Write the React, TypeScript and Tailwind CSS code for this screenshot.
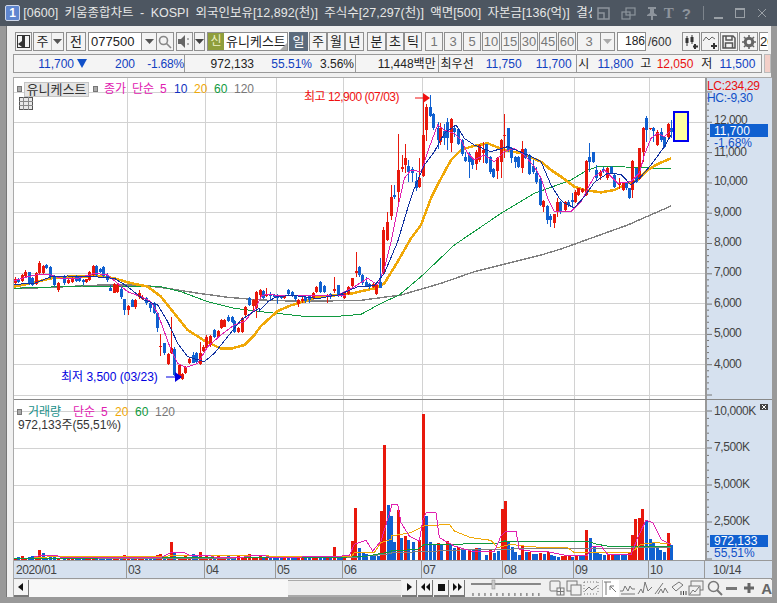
import React from 'react';

const RED = '#e8180c';
const BLUE = '#1060d0';

// candle tables read off the chart: [x, red?, top, bottom, high, low], offset + value/3 gives the pixel
const candlesA = [
  [43,1,88,100,82,106],[52,0,88,96,84,100],[64,1,76,94,72,96],[73,1,65,78,60,80],[85,0,66,100,66,104],[94,0,85,104,80,108],
  [106,1,70,102,66,104],[115,1,38,68,32,72],[127,1,47,70,44,76],[136,0,45,55,42,58],[148,0,52,82,48,86],[160,0,78,105,76,110],
  [170,1,98,120,96,126],[190,0,78,100,74,104],[202,1,90,100,88,102],[214,1,85,95,80,98],[226,0,78,92,76,96],[235,0,80,92,78,96],
  [245,0,90,97,88,105],[254,1,88,95,86,98],[265,1,65,90,62,92],[276,1,47,75,45,78],[286,0,47,75,45,80],[298,0,58,65,55,70],
  [307,0,50,78,48,82],[319,0,75,90,70,97],[328,0,115,122,105,124],[340,1,103,128,100,130],[349,1,105,125,102,128],[360,0,117,140,112,146],
  [370,0,148,180,146,195],[382,1,168,180,165,195],[394,0,150,170,148,172],[403,1,150,170,148,176],[415,1,130,140,120,146],[424,1,140,146,136,150],
  [436,0,145,160,142,164],[446,0,160,175,158,186],[458,0,160,188,156,192],[467,0,190,235,186,245],[478,1,288,292,252,318],[490,0,280,310,278,316],
  [500,1,312,343,310,346],[511,1,295,310,200,312],[520,0,297,375,292,378],[533,1,345,385,343,388],[542,1,372,387,368,390],[553,1,350,368,348,372],
  [563,1,327,338,324,342],[575,0,315,338,305,340],[584,0,310,335,306,338],[596,1,310,342,275,346],[607,1,290,303,286,305],[616,1,260,295,256,298],
  [628,1,258,285,254,290],[638,0,240,262,236,265],[650,1,243,262,240,264],[660,1,210,235,206,238],[670,1,210,230,206,232],[680,0,200,212,196,216],
  [692,0,200,215,198,218],[700,0,213,247,210,248],[712,1,233,245,230,248],[724,1,205,245,200,248],[733,1,170,195,168,198],[745,0,145,165,140,168],
  [755,1,150,168,146,182],[765,1,125,175,122,205],[777,1,120,135,116,140],
];
const candlesB = [
  [35,0,88,108,85,112],[46,1,98,103,78,106],[57,0,98,103,90,115],[68,0,100,104,96,108],[78,0,102,108,95,125],[90,0,100,108,98,112],
  [100,1,100,107,98,110],[112,0,84,97,82,100],[122,0,90,100,88,104],[132,0,100,112,98,118],[142,1,113,125,110,135],[153,1,112,118,105,122],
  [163,0,105,118,100,124],[175,0,103,115,100,122],[186,1,93,108,90,112],[196,1,75,90,72,94],[208,0,60,90,58,94],[218,0,73,90,70,94],
  [228,1,100,105,96,122],[238,0,95,105,92,110],[250,1,82,88,45,92],[260,0,70,100,68,104],[270,0,95,103,92,106],[280,1,92,108,90,112],
];
const candlesC = [
  [22,1,575,597,572,600],[34,1,550,572,548,575],[44,1,528,535,470,545],[55,0,515,540,512,545],[64,0,540,565,538,570],[76,0,560,572,546,576],
  [85,0,567,577,565,582],[97,1,567,577,565,580],[106,1,570,597,568,600],[118,0,560,578,490,580],[127,1,405,535,395,538],[139,1,380,435,350,438],
  [151,1,305,362,270,376],[160,0,300,307,270,312],[172,1,225,290,118,320],[182,1,215,222,180,232],[193,1,190,210,148,235],[202,0,212,230,195,262],
  [214,0,222,235,215,262],[224,0,258,280,235,288],[235,1,250,275,190,280],[247,1,120,243,12,246],[256,1,35,105,28,138],[267,0,35,62,0,65],
  [277,0,58,100,55,106],[290,0,100,135,80,162],[298,1,100,140,85,150],[310,0,108,128,88,150],[319,0,82,130,68,165],[331,1,72,145,70,172],
  [340,0,100,110,92,125],[352,0,103,148,98,150],[364,0,135,178,132,182],[373,0,185,197,172,200],[385,0,178,200,170,250],[394,0,190,210,188,222],
  [406,1,170,207,165,225],[415,1,150,195,148,200],[427,1,165,175,140,205],[436,0,148,205,146,208],[448,0,185,230,182,236],[457,0,222,245,218,250],
  [469,1,190,228,185,252],[481,1,135,200,132,248],[490,1,120,122,58,190],[502,0,100,165,98,170],[511,0,160,188,155,205],[523,0,186,200,182,218],
  [532,0,185,215,182,220],[544,1,163,220,138,235],[553,0,162,190,160,192],[565,0,180,237,178,240],[577,0,213,232,196,238],[586,0,235,262,215,268],
  [598,0,252,330,250,334],[607,1,318,335,314,350],[619,0,332,375,330,388],[628,0,362,375,358,395],[640,1,358,385,356,398],[649,1,322,352,310,365],
  [658,0,320,352,318,358],
];
const candlesD = [
  [42,1,320,345,318,348],[52,0,320,330,316,335],[62,0,315,320,295,340],[72,1,290,320,286,324],[82,1,280,300,278,304],[92,1,282,290,278,294],
  [104,1,198,300,195,304],[114,0,185,200,145,230],[127,0,172,200,170,204],[136,0,225,250,210,255],[148,1,230,242,226,256],[157,0,222,228,215,234],
  [169,1,220,250,215,254],[181,0,215,235,212,238],[190,0,240,275,238,278],[205,1,265,270,250,282],[217,1,265,285,262,288],[225,0,265,280,262,286],
  [233,0,280,310,278,312],[244,1,198,285,195,308],[254,0,220,260,218,264],[265,1,160,252,158,256],[275,1,98,170,96,200],[286,0,70,105,62,140],
  [298,1,100,103,98,106],[305,0,100,108,96,140],[318,1,110,150,106,154],[329,0,112,135,98,140],[340,0,125,155,122,160],[350,1,88,125,84,128],
  [361,0,100,110,75,130],
];

type Row = number[];
const toCandles = (rows: Row[], ox: number, oy: number) =>
  rows.map(([z, red, top, bot, hi, lo]) => ({
    x: Math.round(ox + z / 3),
    red: red === 1,
    top: oy + top / 3,
    bot: oy + bot / 3,
    hi: oy + hi / 3,
    lo: oy + lo / 3,
  }));

const candles = [
  ...toCandles(candlesA, 0, 250),
  ...toCandles(candlesB, 250, 262),
  ...toCandles(candlesC, 340, 95),
  ...toCandles(candlesD, 550, 95),
];

const line = (...parts: [number, number, number[]][]) =>
  parts
    .map(([ox, oy, flat]) => {
      const out: string[] = [];
      for (let i = 0; i < flat.length; i += 2) out.push(ox + flat[i] / 3 + ',' + (oy + flat[i + 1] / 3));
      return out.join(' ');
    })
    .join(' ');

const ma5 = line(
  [0, 250, [40,92,80,80,120,72,150,75,180,85,230,85,280,70,320,75,350,100,380,125,420,140,450,155,470,190,490,245,510,300,530,340,555,352,590,340,620,290,660,255,700,225,730,215,760,180,780,140]],
  [250, 262, [30,100,50,98,85,100,150,100,190,100,240,100,280,100]],
  [340, 95, [0,595,40,575,80,550,110,570,130,520,150,440,170,340,190,250,210,225,240,230,260,170,290,90,310,105,340,115,360,135,380,175,400,195,430,180,460,200,490,170,520,160,550,180,580,215,600,250,620,310,640,350,660,350]],
  [550, 95, [60,350,90,320,110,280,130,245,160,225,200,265,240,260,265,235,280,180,300,130,320,115,340,125,360,105]],
);
const ma10 = line(
  [0, 250, [40,103,100,100,150,80,200,78,280,80,340,85,380,110,430,150,470,165,500,215,530,280,560,320,610,335,640,310,680,260,720,210,750,190,775,175]],
  [250, 262, [25,147,50,120,75,105,120,100,150,103,200,110,250,100,280,97]],
  [340, 95, [0,597,50,575,100,572,130,535,170,440,200,340,220,280,250,210,280,170,310,115,345,90,370,130,400,150,450,170,500,155,560,180,600,200,630,270,655,310]],
  [550, 95, [40,325,70,338,100,305,130,262,170,235,210,238,240,270,270,245,300,210,340,155,360,120]],
);
const ma20 = line(
  [0, 250, [40,110,100,97,150,85,200,80,300,78,340,85,380,97,440,110,480,140,520,190,560,240,610,272,660,296,690,296,730,285,760,255,780,228]],
  [250, 262, [80,147,120,130,160,118,200,105,250,100,300,95,330,88]],
  [340, 95, [100,580,130,565,170,500,210,430,240,390,270,310,300,250,330,195,360,165,390,155,440,145,490,165,540,175,600,200,630,225]],
  [550, 95, [30,245,70,275,100,285,150,292,190,285,230,265,260,255,290,225,320,207,360,190]],
);
const ma60 = line(
  [0, 250, [40,115,90,113,240,108,480,110,540,125,620,155,700,175,780,185]],
  [300, 316, [0,0,120,0,180,-5]],
  [340, 95, [120,625,175,600,240,545,340,450,480,355,580,295]],
  [550, 95, [60,255,110,225,140,215,200,215,360,222]],
);
const ma120 = line(
  [0, 250, [40,115,130,113,300,105,420,105,500,115,580,128,680,142,780,150]],
  [250, 262, [150,118,330,115]],
  [340, 95, [180,600,300,565,400,530,500,505,600,480,660,462]],
  [550, 95, [230,390,360,333]],
);

const volPink = line(
  [0, 480, [100,228,120,222,165,222,180,230,480,230,510,215,550,215,565,222,620,222,640,228,730,228,760,223,790,223,810,230,1000,226,1045,224,1060,190,1095,178,1115,210,1140,180,1170,82]],
  [390, 480, [0,70,20,70,30,125,55,165,85,180,95,120,105,95,135,95,145,170,190,195,240,210,310,212,330,165,345,150,375,150,385,205,430,212,470,212,520,222,590,222,605,195,630,195,650,220,720,222,740,170,765,118,785,125,810,175,840,190]],
);
const volOrange = line(
  [0, 480, [100,230,160,227,335,227,340,228,555,224,720,224,1050,228,1060,215,1120,215,1140,185,1170,175]],
  [390, 480, [0,165,60,155,100,135,175,130,190,150,240,170,300,178,320,200,360,190,400,195,460,200,530,200,550,215,640,215,720,215,750,190,790,185,840,188]],
);
const volGreen = line(
  [0, 480, [40,232,1050,228,1100,225,1170,212]],
  [390, 480, [0,210,80,205,100,190,215,190,220,186,320,186,340,180,590,182,620,190,660,197,840,198]],
);
const volGray = line(
  [0, 480, [40,233,1050,230,1170,218]],
  [390, 480, [0,215,100,212,250,205,840,200]],
);

// volume bars up to x=340 sit at the bottom with a few spikes, after that they are read one by one
const spikes: Record<number, [number, number]> = { 38: [1, 30], 42: [0, 20], 123: [1, 14], 155: [1, 15], 159: [1, 18], 170: [1, 54], 173: [0, 22], 193: [0, 18], 198: [1, 24], 248: [1, 18], 333: [1, 39] };
const earlyBars = candles
  .filter((c) => c.x < 345)
  .map((c, i) => {
    const key = Object.keys(spikes).map(Number).find((k) => Math.abs(k - c.x) <= 1);
    if (key !== undefined) return { x: c.x, red: spikes[key][0] === 1, h: spikes[key][1] / 3 };
    return { x: c.x, red: c.red, h: 2 + (i % 3) };
  });
const lateBars = [
  [351,1,57],[354,1,156],[358,0,36],[362,0,20],[365,0,18],[370,0,15],[373,0,12],[377,0,12],[380,1,147],[383,1,345],[387,0,165],
  [390,0,132],[393,0,55],[397,1,150],[400,0,65],[404,1,72],[407,0,60],[412,0,55],[418,1,60],[422,1,438],[425,0,132],[429,0,55],
  [433,0,45],[437,1,50],[440,0,45],[446,1,57],[449,0,45],[453,0,35],[457,1,40],[461,0,35],[463,0,30],[468,1,30],[472,0,30],
  [475,1,35],[478,0,35],[485,0,15],[489,1,30],[493,0,20],[497,0,28],[501,1,152],[504,1,177],[507,0,55],[511,0,40],[514,0,25],
  [518,0,15],[521,1,45],[525,0,25],[528,1,25],[532,0,18],[535,0,18],[539,1,20],[543,0,18],[547,1,25],[550,0,15],[553,0,12],
  [557,0,10],[561,1,12],[564,1,12],[568,1,15],[571,0,10],[575,1,15],[579,0,12],[582,0,12],[585,1,90],[589,0,65],[593,0,40],
  [596,0,25],[599,0,18],[603,0,15],[607,1,15],[611,1,15],[614,0,15],[617,0,15],[621,0,15],[624,0,15],[628,1,25],[631,1,75],
  [634,1,122],[638,1,125],[641,1,152],[645,0,118],[649,0,62],[652,0,50],[656,0,37],[659,0,30],[663,0,25],[667,1,80],[670,0,45],
].map(([x, red, h]) => ({ x, red: red === 1, h: h / 3 }));
const volBars = [...earlyBars, ...lateBars];

const gridX = [126, 204, 275, 342, 421, 502, 573, 648];
const priceGrid = [92, 122, 152, 182, 212, 243, 273, 303, 334, 364, 395];
const volGrid = [410, 447, 484, 521];
const axisLabels = [
  ['12,000', 120], ['10,000', 181], ['9,000', 212], ['8,000', 242], ['7,000', 272], ['6,000', 303], ['5,000', 333], ['4,000', 364],
] as const;
const priceTicks = Array.from({ length: 52 }, (_, i) => 92 + i * 6.06);
const volTicks = Array.from({ length: 26 }, (_, i) => 410 + i * 7.4);

const Btn = ({ className = '', children }: { className?: string; children?: React.ReactNode }) => (
  <div className={'flex items-center justify-center h-[19px] border border-[#8f8f8f] bg-[#f3f3f3] text-[13px] text-[#222] ' + className}>{children}</div>
);

const Arrow = ({ color = '#555' }: { color?: string }) => (
  <svg width="9" height="5" viewBox="0 0 9 5"><polygon points="0,0 9,0 4.5,5" fill={color} /></svg>
);

const Ico = ({ className = '', children }: { className?: string; children: React.ReactNode }) => (
  <svg width="16" height="16" viewBox="0 0 16 16" fill="none" stroke="#777" className={className}>{children}</svg>
);

const Num = ({ n }: { n: string }) => <Btn className="w-[18px] text-[#777] text-[12px]">{n}</Btn>;

const Square = () => <div className="w-[5px] h-[6px] bg-[#aaa] border border-[#777]" />;

export default function App() {
  return (
    <div className="w-[777px] h-[603px] flex flex-col overflow-hidden bg-[#999] font-['Liberation_Sans','Noto_Sans_CJK_KR',sans-serif]">
      {/* title bar */}
      <div className="h-[26px] flex items-center bg-[#4d5661] pl-[5px] pr-[10px]">
        <div className="w-[16px] h-[16px] rounded-[2px] bg-[#5f86cf] border border-[#cfd8ea] flex items-center justify-center text-white text-[12px] font-bold">1</div>
        <div className="ml-[3px] w-[596px] overflow-hidden whitespace-nowrap text-[12.5px] text-[#e6e6e6] [word-spacing:3px]">
          [0600] 키움종합차트 - KOSPI 외국인보유[12,892(천)] 주식수[27,297(천)] 액면[500] 자본금[136(억)] 결산
        </div>
        <div className="ml-[5px] flex items-center gap-[5px]">
          <svg width="14" height="13" viewBox="0 0 14 13" fill="none" stroke="#8d949c" strokeWidth="1.5"><rect x="1" y="1" width="11" height="11" /><path d="M1 6h6v6" /></svg>
          <svg width="15" height="13" viewBox="0 0 15 13" fill="none" stroke="#8d949c" strokeWidth="1.2" className="ml-[5px]"><rect x="5" y="1" width="9" height="7" /><rect x="1" y="5" width="8" height="7" /></svg>
          <svg width="14" height="13" viewBox="0 0 14 13" className="ml-[4px]"><path d="M3 0h8v2H9v4l3 2v1H8v4H6V9H2V8l3-2V2H3z" fill="#8d949c" /></svg>
          <span className="text-[15px] leading-none font-bold text-[#8d949c] font-['Liberation_Serif',serif]">T</span>
          <span className="ml-[3px] text-[15px] leading-none font-bold text-[#8d949c]">?</span>
          <div className="ml-[7px] w-px h-[14px] bg-[#7d848c]" />
          <div className="ml-[5px] mt-[10px] w-[9px] h-[2px] bg-[#9aa0a6]" />
          <div className="ml-[7px] w-[10px] h-[10px] border border-t-2 border-[#9aa0a6]" />
          <svg width="10" height="10" viewBox="0 0 10 10" stroke="#9aa0a6" className="ml-[7px]"><path d="M1 1l8 8M9 1l-8 8" /></svg>
        </div>
      </div>

      {/* window body */}
      <div className="flex-1 mx-[6px] mb-[6px] pl-[6px] bg-[#f0f0f0] flex flex-col border-l border-[#777]">
        {/* toolbar */}
        <div className="mt-[6px] h-[19px] pl-[2px] flex items-center text-[13px]">
          <Btn className="w-[17px]">
            <svg width="13" height="13" viewBox="0 0 13 13"><rect x="0.5" y="0.5" width="12" height="12" fill="none" stroke="#333" /><rect x="5" y="1" width="3" height="11" fill="#333" /><path d="M5 6L1 9l4 3z" fill="#333" /></svg>
          </Btn>
          <Btn className="ml-[1px] w-[31px] justify-between">
            <span className="w-[18px] text-center">주</span>
            <div className="h-full border-l border-[#bbb] w-[13px] flex items-center justify-center"><Arrow /></div>
          </Btn>
          <Btn className="ml-[2px] w-[20px]">전</Btn>
          <div className="ml-[2px] w-[54px] h-[19px] border border-[#8f8f8f] bg-white pl-[2px] text-[13px] leading-[17px] text-[#222]">077500</div>
          <Btn className="w-[15px] border-l-0"><Arrow /></Btn>
          <Btn className="w-[17px] border-l-0">
            <svg width="14" height="14" viewBox="0 0 14 14" fill="none" stroke="#888" strokeWidth="1.6"><circle cx="5.5" cy="5.5" r="4" /><path d="M8.5 8.5l4.5 4.5" /></svg>
          </Btn>
          <Btn className="ml-[2px] w-[17px]">
            <svg width="13" height="13" viewBox="0 0 13 13"><path d="M0 4h3l4-4v13L3 9H0z" fill="#666" /><path d="M9 4h2M9 9h2" stroke="#666" /></svg>
          </Btn>
          <Btn className="ml-[1px] w-[11px]"><Arrow color="#444" /></Btn>
          <div className="ml-[2px] w-[81px] h-[19px] border border-[#8f8f8f] bg-white flex items-center relative">
            <div className="w-[16px] h-[17px] bg-[#8f9e3c] text-[#eef2c8] text-[12px] text-center leading-[17px]">신</div>
            <span className="ml-[2px] text-[13px] text-[#222] whitespace-nowrap">유니케스트</span>
            <div className="absolute right-0 bottom-0 w-0 h-0 border-l-[7px] border-l-transparent border-b-[7px] border-b-[#aaa]" />
          </div>
          <div className="ml-[1px] w-[19px] h-[19px] bg-[#5c6b7c] text-white text-[13px] text-center leading-[19px]">일</div>
          <Btn className="w-[18px] ml-px">주</Btn>
          <Btn className="w-[18px]">월</Btn>
          <Btn className="w-[19px]">년</Btn>
          <Btn className="ml-[3px] w-[19px]">분</Btn>
          <Btn className="w-[18px]">초</Btn>
          <Btn className="w-[18px]">틱</Btn>
          <div className="ml-[3px] flex gap-px">
            {['1', '3', '5', '10', '15', '30', '45', '60'].map((n) => <Num key={n} n={n} />)}
          </div>
          <Btn className="ml-[1px] w-[24px] text-[#777] text-[12px]">3</Btn>
          <Btn className="w-[14px] border-l-0"><Arrow color="#aaa" /></Btn>
          <div className="ml-[2px] w-[29px] h-[19px] border border-[#8f8f8f] bg-white text-right text-[12px] leading-[17px] text-[#222]">186</div>
          <span className="ml-[2px] w-[34px] text-[12px] text-[#333]">/600</span>
          <Btn className="w-[18px]">
            <svg width="15" height="14" viewBox="0 0 15 14"><path d="M3 1v10M8 0v9" stroke="#333" /><rect x="1.5" y="3" width="3" height="5" fill="#333" /><rect x="6.5" y="2" width="3" height="5" fill="#333" /><path d="M11 9v5M9 11.5h5" stroke="#333" strokeWidth="2" /></svg>
          </Btn>
          <Btn className="ml-px w-[18px]">
            <svg width="15" height="14" viewBox="0 0 15 14" fill="none"><path d="M0 6l3-4 3 3 3-3 3 2" stroke="#666" /><path d="M11 8v6M8 11h6" stroke="#333" strokeWidth="2" /></svg>
          </Btn>
          <Btn className="ml-px w-[18px]">
            <svg width="14" height="14" viewBox="0 0 14 14" fill="none" stroke="#555" strokeWidth="1.5"><path d="M1 1h10l2 2v10H1z" /><path d="M4 1v4h6V1M3.5 13V8h7v5" /></svg>
          </Btn>
          <Btn className="ml-px w-[19px]">
            <svg width="14" height="14" viewBox="0 0 14 14"><circle cx="7" cy="7" r="3.8" fill="none" stroke="#666" strokeWidth="3" /><path d="M7 0v3M7 11v3M0 7h3M11 7h3M2 2l2 2M10 10l2 2M2 12l2-2M10 4l2-2" stroke="#666" strokeWidth="1.6" /></svg>
          </Btn>
          <div className="ml-px w-[9px] h-[19px] border-y border-l border-[#8f8f8f] bg-white overflow-hidden text-[13px] leading-[17px] text-[#222]">20</div>
        </div>

        {/* quote row */}
        <div className="mt-[3px] h-[19px] flex text-[12px] text-[#222] whitespace-nowrap">
          <div className="w-[172px] flex items-center border border-[#999] bg-[#f4f4f4] text-[#1040c0]">
            <span className="w-[60px] text-right">11,700</span>
            <svg width="10" height="9" viewBox="0 0 10 9" className="ml-[3px]"><polygon points="0,0 10,0 5,9" fill="#1050c8" /></svg>
            <span className="w-[48px] text-right">200</span>
            <span className="w-[49px] text-right tracking-[-0.2px]">-1.68%</span>
          </div>
          <div className="w-[171px] flex items-center border-y border-r border-[#999] bg-[#f4f4f4]">
            <span className="w-[69px] text-right">972,133</span>
            <span className="w-[58px] text-right text-[#1040c0]">55.51%</span>
            <span className="w-[42px] text-right">3.56%</span>
          </div>
          <div className="w-[83px] flex items-center border-y border-r border-[#999] bg-[#f4f4f4]">
            <span className="w-[80px] text-right">11,448백만</span>
          </div>
          <div className="w-[139px] flex items-center border-y border-r border-[#999] bg-[#f4f4f4]">
            <span className="ml-[2px] w-[36px]">최우선</span>
            <span className="w-[45px] text-right text-[#1040c0]">11,750</span>
            <span className="w-[50px] text-right text-[#1040c0]">11,700</span>
          </div>
          <div className="w-[185px] flex items-center border-y border-r border-[#999] bg-[#f4f4f4]">
            <span className="ml-[1px] w-[12px]">시</span>
            <span className="w-[43px] text-right text-[#1040c0]">11,800</span>
            <span className="ml-[7px] w-[12px]">고</span>
            <span className="w-[41px] text-right text-[#e81010]">12,050</span>
            <span className="ml-[8px] w-[12px]">저</span>
            <span className="w-[42px] text-right text-[#1040c0]">11,500</span>
          </div>
          <div className="ml-[2px] w-[7px] bg-[#f3cfc8] border border-[#bbb]" />
        </div>

        {/* chart */}
        <div className="mt-[4px] w-[759px] flex flex-col border-l border-t border-[#aaa]">
          {/* price pane */}
          <div className="h-[322px] flex border-b border-[#888]">
            <div className="relative w-[691px] bg-white">
              <svg width="691" height="321" viewBox="13 78 691 321" className="block">
                {priceGrid.map((y) => <line key={y} x1="13" x2="704" y1={y + 0.5} y2={y + 0.5} stroke="#d2d2d2" />)}
                {gridX.map((x) => <line key={x} x1={x + 0.5} x2={x + 0.5} y1="78" y2="399" stroke="#d2d2d2" />)}
                <polyline points={ma120} fill="none" stroke="#808080" strokeWidth="1.4" shapeRendering="crispEdges" />
                <polyline points={ma60} fill="none" stroke="#109a40" strokeWidth="1" shapeRendering="crispEdges" />
                <polyline points={ma20} fill="none" stroke="#f0a808" strokeWidth="2.5" shapeRendering="crispEdges" />
                {candles.map((c, i) => (
                  <g key={i} fill={c.red ? RED : BLUE} shapeRendering="crispEdges">
                    <rect x={c.x} y={c.hi} width="1" height={c.lo - c.hi} />
                    <rect x={c.x - 1} y={c.top} width="3" height={Math.max(1, c.bot - c.top)} />
                  </g>
                ))}
                <polyline points={ma5} fill="none" stroke="#e020b0" strokeWidth="1" shapeRendering="crispEdges" />
                <polyline points={ma10} fill="none" stroke="#1030a0" strokeWidth="1" shapeRendering="crispEdges" />
                <rect x="673" y="112" width="14" height="29" fill="#ffffa0" stroke="#0000f0" strokeWidth="2" />
                <text x="303" y="101" letterSpacing="-0.5" className="text-[12px] fill-[#f01010]">최고 12,900 (07/03)</text>
                <path d="M414 98h8" stroke="#f01010" /><polygon points="422,93 429,98 422,103" fill="#f01010" />
                <text x="60" y="381" className="text-[12px] fill-[#0000e0]">최저 3,500 (03/23)</text>
                <path d="M165 377h9" stroke="#0000e0" /><polygon points="174,372 181,377 174,382" fill="#0000e0" />
              </svg>
              {/* legend over the chart */}
              <div className="absolute left-[3px] top-[2px] flex items-center text-[12px] whitespace-nowrap">
                <Square />
                <div className="ml-[2px] w-[65px] h-[15px] bg-[#e4e4e4] border border-[#c4c4c4] text-[13px] leading-[13px] text-center text-[#333]">유니케스트</div>
                <div className="ml-[4px]"><Square /></div>
                <span className="ml-[6px] w-[28px] text-[#e020b0]">종가</span>
                <span className="w-[28px] text-[#e020b0]">단순</span>
                <span className="w-[14px] text-[#e020b0]">5</span>
                <span className="w-[20px] text-[#1030c0]">10</span>
                <span className="w-[20px] text-[#f0a808]">20</span>
                <span className="w-[20px] text-[#109a40]">60</span>
                <span className="text-[#777]">120</span>
              </div>
              <svg width="14" height="13" viewBox="0 0 14 13" className="absolute left-[5px] top-[19px]"><rect x="0.5" y="0.5" width="13" height="12" fill="#e8e8e8" stroke="#555" /><path d="M0 4.5h14M0 8.5h14M4.5 0v13M9.5 0v13" stroke="#888" /></svg>
            </div>
            <div className="w-[67px] border-l-2 border-[#999] bg-[#d6e1ef]">
              <svg width="65" height="321" viewBox="706 78 65 321" className="block">
                {priceTicks.map((y, i) => <line key={y} x1="706" x2={i % 5 === 0 ? 711 : 708} y1={y} y2={y} stroke="#777" />)}
                <text x="706" y="90" letterSpacing="-0.3" className="text-[12px] fill-[#e81010]">LC:234,29</text>
                <text x="706" y="102" letterSpacing="-0.3" className="text-[12px] fill-[#1050c8]">HC:-9,30</text>
                {axisLabels.map(([t, y]) => <text key={t} x="713" y={y + 4} letterSpacing="-0.6" className="text-[12px] fill-[#444]">{t}</text>)}
                <text x="713" y="156" letterSpacing="-0.6" className="text-[12px] fill-[#444]">11,000</text>
                <rect x="709" y="124" width="58" height="13" fill="#1060d0" />
                <text x="713" y="135" className="text-[12px] fill-white">11,700</text>
                <text x="713" y="147" className="text-[12px] fill-[#1050c8]">-1,68%</text>
              </svg>
            </div>
          </div>

          {/* volume pane */}
          <div className="h-[160px] flex">
            <div className="relative w-[691px] bg-white">
              <svg width="691" height="160" viewBox="13 399 691 160" className="block">
                {volGrid.map((y) => <line key={y} x1="13" x2="704" y1={y + 0.5} y2={y + 0.5} stroke="#d2d2d2" />)}
                {gridX.map((x) => <line key={x} x1={x + 0.5} x2={x + 0.5} y1="399" y2="559" stroke="#d2d2d2" />)}
                {volBars.map((b, i) => (
                  <rect key={i} x={b.x - 1} y={559 - b.h} width="3" height={b.h} fill={b.red ? RED : BLUE} shapeRendering="crispEdges" />
                ))}
                <polyline points={volGray} fill="none" stroke="#808080" strokeWidth="1" shapeRendering="crispEdges" />
                <polyline points={volGreen} fill="none" stroke="#109a40" strokeWidth="1" shapeRendering="crispEdges" />
                <polyline points={volOrange} fill="none" stroke="#f0a808" strokeWidth="1" shapeRendering="crispEdges" />
                <polyline points={volPink} fill="none" stroke="#e020b0" strokeWidth="1" shapeRendering="crispEdges" />
              </svg>
              <div className="absolute left-[3px] top-[3px] flex items-center text-[12px] whitespace-nowrap">
                <Square />
                <span className="ml-[6px] w-[45px] text-[#20908a]">거래량</span>
                <span className="w-[28px] text-[#e020b0]">단순</span>
                <span className="w-[14px] text-[#e020b0]">5</span>
                <span className="w-[20px] text-[#f0a808]">20</span>
                <span className="w-[20px] text-[#109a40]">60</span>
                <span className="text-[#777]">120</span>
              </div>
              <div className="absolute left-[4px] top-[16px] text-[12px] text-[#333] whitespace-nowrap">972,133주(55,51%)</div>
            </div>
            <div className="w-[67px] border-l-2 border-[#999] bg-[#d6e1ef]">
              <svg width="65" height="160" viewBox="706 399 65 160" className="block">
                {volTicks.map((y, i) => <line key={y} x1="706" x2={i % 5 === 0 ? 711 : 708} y1={y} y2={y} stroke="#777" />)}
                <text x="713" y="414" letterSpacing="-0.4" className="text-[12px] fill-[#444]">10,000K</text>
                <text x="713" y="450" letterSpacing="-0.4" className="text-[12px] fill-[#444]">7,500K</text>
                <text x="713" y="487" letterSpacing="-0.4" className="text-[12px] fill-[#444]">5,000K</text>
                <text x="713" y="524" letterSpacing="-0.4" className="text-[12px] fill-[#444]">2,500K</text>
                <rect x="709" y="534" width="58" height="12" fill="#1060d0" />
                <text x="713" y="544" className="text-[12px] fill-white">972,133</text>
                <text x="713" y="556" className="text-[12px] fill-[#1050c8]">55,51%</text>
                <rect x="759" y="403" width="8" height="6" fill="#444" />
                <path d="M761 404l4 4M765 404l-4 4" stroke="#fff" />
              </svg>
            </div>
          </div>

          {/* date axis */}
          <div className="h-[19px] flex bg-[#d6e1ef] border-y border-[#999] text-[12px] text-[#444] tracking-[-0.4px]">
            <div className="w-[113px] pl-[2px] border-r border-[#999]">2020/01</div>
            <div className="w-[78px] pl-[1px] border-r border-[#999]">03</div>
            <div className="w-[71px] pl-[1px] border-r border-[#999]">04</div>
            <div className="w-[67px] pl-[1px] border-r border-[#999]">05</div>
            <div className="w-[79px] pl-[1px] border-r border-[#999]">06</div>
            <div className="w-[81px] pl-[1px] border-r border-[#999]">07</div>
            <div className="w-[71px] pl-[1px] border-r border-[#999]">08</div>
            <div className="w-[75px] pl-[1px] border-r border-[#999]">09</div>
            <div className="w-[56px] pl-[1px] border-r border-[#999]">10</div>
            <div className="pl-[8px]">10/14</div>
          </div>

          {/* scrollbar and tools */}
          <div className="h-[18px] flex items-center">
            <div className="w-[15px] h-[17px] bg-[#f4f4f4] border-b-2 border-r border-[#777] flex items-center justify-center">
              <svg width="5" height="8" viewBox="0 0 5 8"><polygon points="5,0 0,4 5,8" fill="#111" /></svg>
            </div>
            <div className="w-[259px] h-[17px] bg-[#f8f8f8]" />
            <div className="w-[114px] h-[17px] bg-[#eee] border-b-2 border-t border-[#aaa]" />
            <div className="ml-px flex gap-px">
              <div className="w-[15px] h-[17px] bg-[#f4f4f4] border-b-2 border-r border-[#777] flex items-center justify-center"><svg width="5" height="8" viewBox="0 0 5 8"><polygon points="0,0 5,4 0,8" fill="#111" /></svg></div>
              <div className="w-[15px] h-[17px] bg-[#f4f4f4] border-b-2 border-r border-[#777] flex items-center justify-center"><svg width="9" height="8" viewBox="0 0 9 8"><polygon points="4,0 0,4 4,8" fill="#111" /><polygon points="9,0 5,4 9,8" fill="#111" /></svg></div>
              <div className="w-[15px] h-[17px] bg-[#f4f4f4] border-b-2 border-r border-[#777] flex items-center justify-center"><div className="w-[7px] h-[7px] bg-[#111]" /></div>
              <div className="w-[15px] h-[17px] bg-[#f4f4f4] border-b-2 border-r border-[#777] flex items-center justify-center"><svg width="9" height="8" viewBox="0 0 9 8"><polygon points="0,0 4,4 0,8" fill="#111" /><polygon points="5,0 9,4 5,8" fill="#111" /></svg></div>
            </div>
            <svg width="72" height="18" viewBox="0 0 72 18" className="ml-[6px]">
              <rect x="0" y="4" width="70" height="2" fill="#888" />
              <rect x="21" y="1" width="3" height="9" fill="#ccc" stroke="#888" strokeWidth="0.5" />
              <path d="M2 14v3M8 14v3M14 14v3M20 14v3M26 14v3M32 14v3M38 14v3M44 14v3M50 14v3M56 14v3M62 14v3M68 14v3" stroke="#555" />
            </svg>
            <div className="ml-[6px] flex items-center gap-[1px] h-[17px] bg-[#f0f0f0]">
              <Ico><rect x="1" y="1" width="10" height="10" rx="1" /><rect x="8" y="8" width="7" height="7" fill="#f0f0f0" /><path d="M11.5 8v7M8 11.5h7" /></Ico>
              <Ico><rect x="1" y="1" width="10" height="10" /><rect x="5" y="5" width="10" height="10" fill="#f0f0f0" /></Ico>
              <Ico className="mr-[2px]"><path d="M1 2h14M1 14h14M1 2v12M15 2v12" strokeDasharray="1 2" /><path d="M2 11l4-4 3 3 5-4" /></Ico>
              <div className="w-[17px] h-[17px] bg-white flex items-center justify-center border-l border-[#bbb]">
                <Ico><path d="M1 2h7M3 2v13M7 6l6 6M7 6v4M7 6h4" /></Ico>
              </div>
              <Ico><path d="M0 11h3l2-5 3 5 2-5 2 3h3M1 14h14" /></Ico>
              <Ico><path d="M1 14l3-5 2 4 2-11 3 9 4-4" /></Ico>
              <Ico><path d="M1 14l8-11M4 14l3-5 2 4 2-5 3 5" /></Ico>
              <Ico><path d="M1 7l7-5 4 3-7 6z" /><path d="M10 15v-4M12.5 15v-4M15 15v-4" stroke="#444" /></Ico>
              <Ico><rect x="3" y="1" width="12" height="9" /><rect x="1" y="6" width="11" height="9" fill="#f0f0f0" /><path d="M2 14l3-4 2 2 4-5" /></Ico>
              <Ico className="ml-[2px]"><circle cx="6.5" cy="6.5" r="5" strokeWidth="1.5" /><path d="M10 10l5 5" strokeWidth="2" /></Ico>
              <div className="ml-[2px] w-[11px] h-[3px] bg-[#777]" />
              <svg width="12" height="12" viewBox="0 0 12 12" className="ml-[5px]"><path d="M6 1v10M1 6h10" stroke="#666" strokeWidth="3" /></svg>
              <span className="ml-[5px] text-[15px] font-bold text-[#666] leading-none">A</span>
            </div>
          </div>
        </div>
      </div>
    </div>
  );
}
